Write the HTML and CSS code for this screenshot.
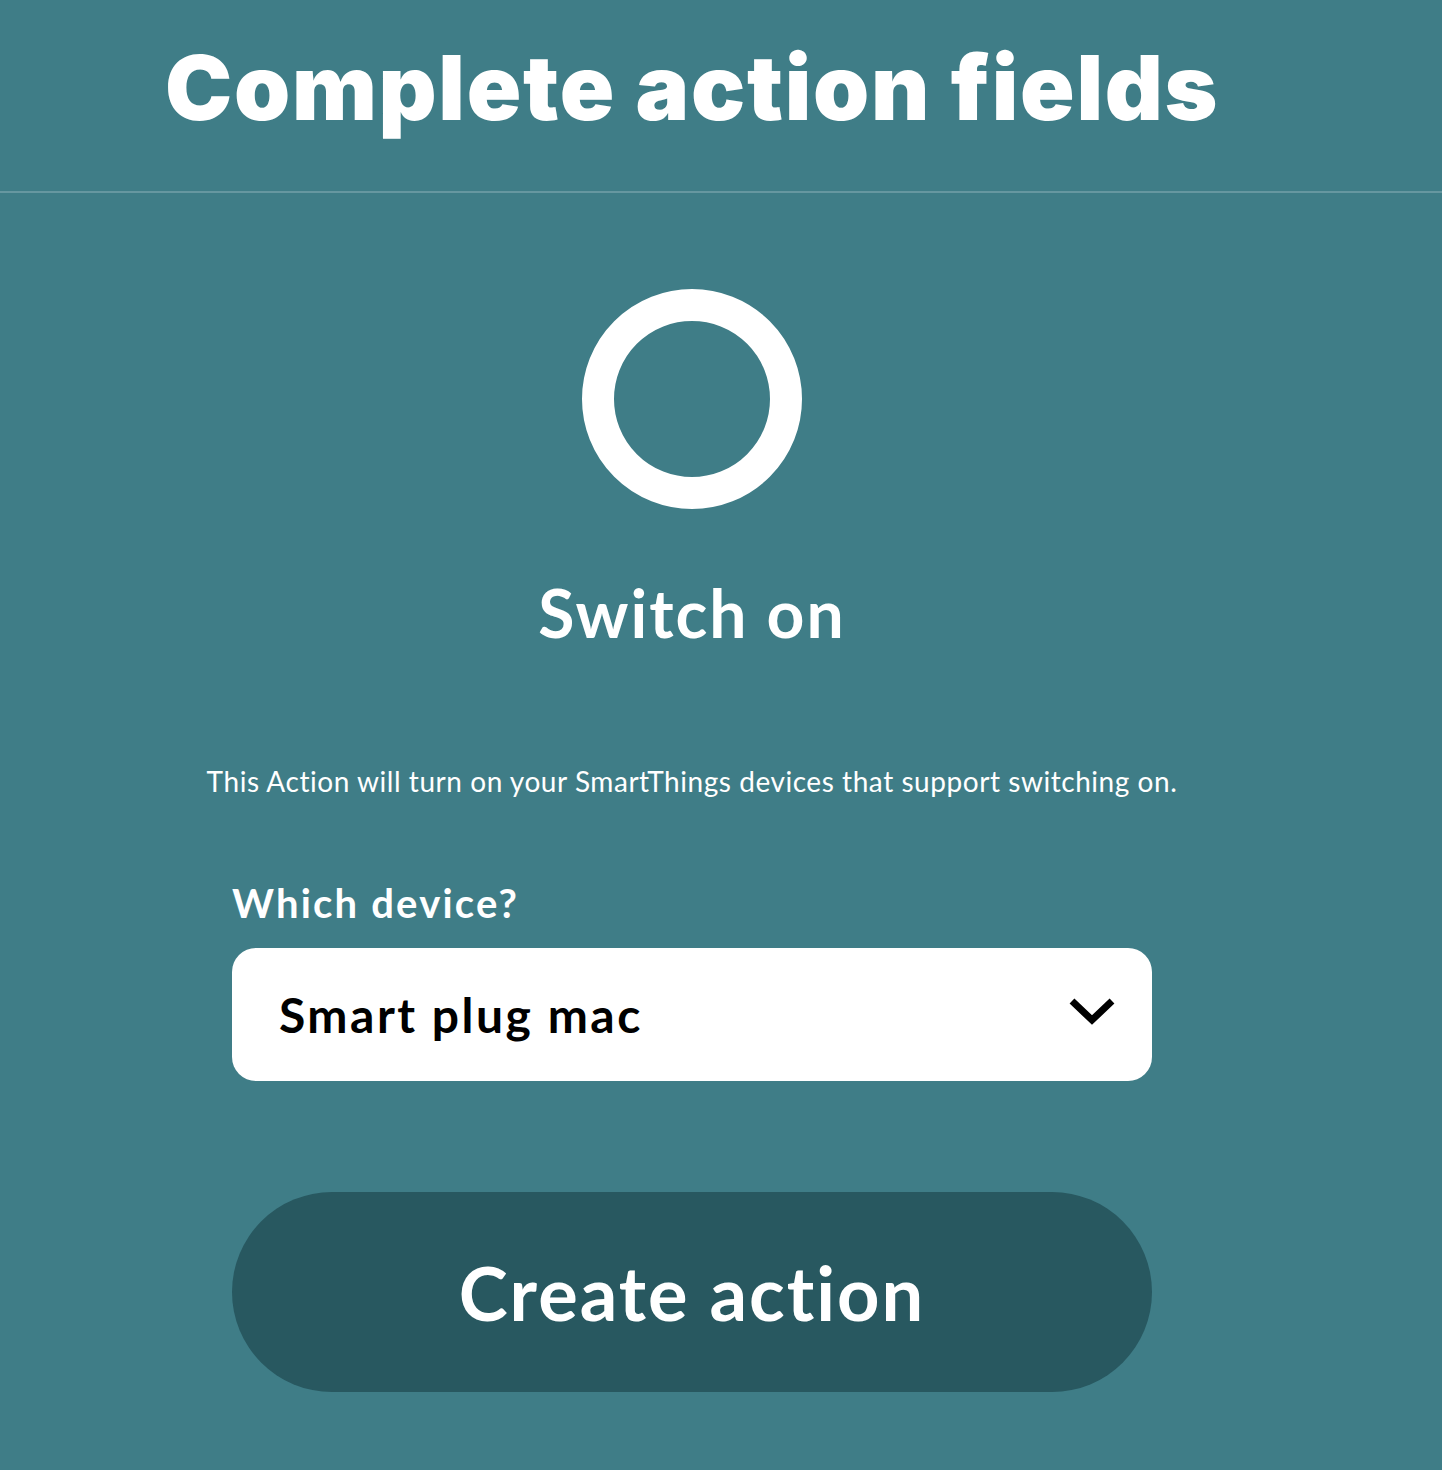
FILE: index.html
```html
<!DOCTYPE html>
<html>
<head>
<meta charset="utf-8">
<link rel="stylesheet" href="styles.css">
</head>
<body>
<header class="header">
  <h1 class="title">Complete action fields</h1>
</header>
<main class="content">
  <div class="icon-wrap">
    <svg class="ring" width="220" height="220" viewBox="0 0 220 220">
      <circle cx="110" cy="110" r="94" fill="none" stroke="#fff" stroke-width="32"/>
    </svg>
  </div>
  <h2 class="action-name">Switch on</h2>
  <p class="desc">This Action will turn on your SmartThings devices that support switching on.</p>
  <div class="field">
    <label class="label">Which device?</label>
    <div class="select">
      <span class="select-value">Smart plug mac</span>
      <svg class="chevron" width="48" height="30" viewBox="0 0 48 30">
        <path d="M4 5 L24 24 L44 5" fill="none" stroke="#000" stroke-width="7"/>
      </svg>
    </div>
  </div>
  <button class="btn">Create action</button>
</main>
</body>
</html>
```
FILE: styles.css
```css
html, body {
  margin: 0;
  padding: 0;
}
body {
  background: #3f7d87;
  color: #fff;
  font-family: Lato, "Noto Sans", sans-serif;
  font-variant-ligatures: none;
  min-height: 1470px;
}
.header {
  border-bottom: 2px solid #6697a0;
  height: 193px;
  box-sizing: border-box;
  padding-left: 165px;
}
.title {
  margin: 0;
  padding-top: 28px;
  font-family: Inter, Lato, sans-serif;
  font-size: 90px;
  font-weight: 900;
  line-height: 120px;
  letter-spacing: 1.7px;
}
.content {
  width: 920px;
  margin-left: 232px;
  display: flex;
  flex-direction: column;
  align-items: center;
}
.icon-wrap {
  margin-top: 96px;
  height: 220px;
}
.ring { display: block; }
.action-name {
  margin: 64px 0 0;
  font-size: 66px;
  font-weight: 700;
  line-height: 80px;
  letter-spacing: 2px;
}
.desc {
  margin: 109px -80px 0;
  font-size: 28px;
  font-weight: 400;
  line-height: 38px;
  letter-spacing: 0.55px;
  text-align: center;
  white-space: nowrap;
}
.field {
  align-self: stretch;
  margin-top: 78px;
  display: flex;
  flex-direction: column;
}
.label {
  font-size: 40px;
  font-weight: 700;
  line-height: 50px;
  letter-spacing: 2.2px;
}
.select {
  margin-top: 20px;
  height: 133px;
  background: #fff;
  border-radius: 24px;
  display: flex;
  align-items: center;
  justify-content: space-between;
  padding: 0 36px 0 47px;
  box-sizing: border-box;
}
.select-value {
  color: #000;
  font-size: 48px;
  font-weight: 700;
  letter-spacing: 2.5px;
}
.chevron { display: block; margin-top: -8px; }
.btn {
  align-self: stretch;
  margin-top: 111px;
  height: 200px;
  border: none;
  border-radius: 100px;
  background: #285860;
  color: #fff;
  font-family: Lato, "Noto Sans", sans-serif;
  font-variant-ligatures: none;
  font-size: 74px;
  font-weight: 700;
  letter-spacing: 2px;
  cursor: pointer;
}
```
